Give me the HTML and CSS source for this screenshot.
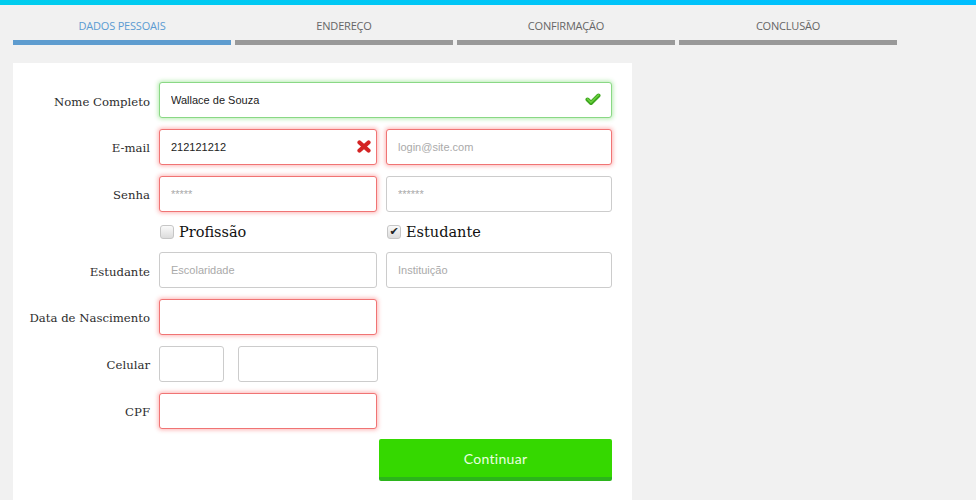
FILE: index.html
```html
<!DOCTYPE html>
<html lang="pt-BR">
<head>
  <meta charset="UTF-8">
  <title>Cadastro</title>
  <link rel="stylesheet" href="styles.css">
</head>
<body>
  <div class="top-bar"></div>

  <ul class="steps">
    <li class="step active">Dados Pessoais</li>
    <li class="step">Endereço</li>
    <li class="step">Confirmação</li>
    <li class="step">Conclusão</li>
  </ul>

  <form class="card">
    <label class="label">Nome Completo</label>
    <div class="field wide">
      <input class="input valid" type="text" value="Wallace de Souza">
      <svg class="status ok" width="16" height="13" viewBox="0 0 16 13">
        <polyline points="2.5,6.5 6,10 13.5,2.5" fill="none" stroke="#3ea51f" stroke-width="4" stroke-linecap="round" stroke-linejoin="round"/>
        <polyline points="2.5,6 6,9.3 13.5,2" fill="none" stroke="#6ad13e" stroke-width="1.6" stroke-linecap="round" stroke-linejoin="round"/>
      </svg>
    </div>

    <label class="label">E-mail</label>
    <div class="field">
      <input class="input error" type="text" value="212121212">
      <svg class="status bad" width="14" height="13" viewBox="0 0 14 13">
        <path d="M2.5 2.5 L11.5 10.5 M11.5 2.5 L2.5 10.5" stroke="#d42424" stroke-width="4.2" stroke-linecap="round"/>
      </svg>
    </div>
    <div class="field">
      <input class="input error" type="text" placeholder="login@site.com">
    </div>

    <label class="label">Senha</label>
    <div class="field">
      <input class="input error" type="text" placeholder="*****">
    </div>
    <div class="field">
      <input class="input" type="text" placeholder="******">
    </div>

    <span></span>
    <label class="check"><span class="box"></span>Profissão</label>
    <label class="check"><span class="box">&#10004;</span>Estudante</label>

    <label class="label">Estudante</label>
    <div class="field">
      <input class="input" type="text" placeholder="Escolaridade">
    </div>
    <div class="field">
      <input class="input" type="text" placeholder="Instituição">
    </div>

    <label class="label">Data de Nascimento</label>
    <div class="field">
      <input class="input error" type="text">
    </div>
    <span></span>

    <label class="label">Celular</label>
    <div class="field phone">
      <input class="input ddd" type="text">
      <input class="input number" type="text">
    </div>
    <span></span>

    <label class="label">CPF</label>
    <div class="field">
      <input class="input error" type="text">
    </div>
    <span></span>

    <button class="submit" type="button">Continuar</button>
  </form>
</body>
</html>
```

FILE: styles.css
```css
body {
  margin: 0;
  background: #f1f1f1;
  font-family: "DejaVu Serif", serif;
  color: #333;
}
.top-bar {
  height: 5px;
  background: linear-gradient(to right, #00cdee, #00beff);
}
.steps {
  list-style: none;
  margin: 0;
  padding: 0 0 0 13px;
  display: flex;
  gap: 4px;
}
.step {
  width: 218px;
  padding-top: 13px;
  height: 22px;
  border-bottom: 5px solid #999;
  text-align: center;
  font-family: "Open Sans", sans-serif;
  font-size: 11px;
  text-transform: uppercase;
  color: #666;
  letter-spacing: -0.2px;
}
.step.active {
  color: #5b9bd1;
  border-bottom-color: #5e9ccf;
}
.card {
  margin: 18px 0 0 13px;
  width: 619px;
  height: 437px;
  box-sizing: border-box;
  padding-top: 19px;
  background: #fff;
  display: grid;
  grid-template-columns: 137px 218px 226px;
  grid-template-rows: 36px 36px 36px 19px 36px 36px 36px 36px 42px;
  align-content: start;
  column-gap: 9px;
  row-gap: 10.8px;
}
.label {
  align-self: center;
  text-align: right;
  font-size: 11.7px;
  padding-top: 3px;
  color: #2d2d2d;
}
.field {
  position: relative;
}
.field.wide {
  grid-column: 2 / 4;
}
.input {
  box-sizing: border-box;
  width: 100%;
  height: 36px;
  margin: 0;
  padding: 0 11px;
  border: 1px solid #ccc;
  border-radius: 3px;
  font-family: "Liberation Sans", sans-serif;
  font-size: 11px;
  color: #222;
  background: #fff;
  outline: none;
}
.input::placeholder {
  color: #aaa;
}
.input.valid {
  border-color: #8ad885;
  box-shadow: 0 0 4px 1px rgba(90, 210, 80, 0.45);
}
.input.error {
  border-color: #f07474;
  box-shadow: 0 0 4px 1px rgba(250, 90, 90, 0.45);
}
.status {
  position: absolute;
  top: 11px;
}
.status.ok {
  right: 11px;
}
.status.bad {
  right: 6px;
}
.phone {
  display: flex;
  gap: 14px;
}
.phone .ddd {
  width: 65px;
  flex: none;
}
.phone .number {
  width: 140px;
  flex: none;
}
.check {
  display: flex;
  align-items: center;
  gap: 5px;
  font-size: 14.5px;
  color: #111;
  padding-left: 1px;
}
.box {
  box-sizing: border-box;
  width: 14px;
  height: 14px;
  border: 1px solid #c6c6c6;
  border-radius: 3px;
  background: linear-gradient(#fafafa, #dcdcdc);
  font-size: 11px;
  line-height: 12px;
  text-align: center;
  color: #222;
  font-family: "DejaVu Sans", sans-serif;
}
.submit {
  grid-column: 2 / 4;
  justify-self: end;
  width: 233px;
  height: 42px;
  border: none;
  border-bottom: 4px solid #2bb51b;
  border-radius: 2px;
  background: #35d800;
  color: #eaffe0;
  font-family: Lato, sans-serif;
  font-size: 14px;
  letter-spacing: 0.3px;
  cursor: pointer;
}
```
